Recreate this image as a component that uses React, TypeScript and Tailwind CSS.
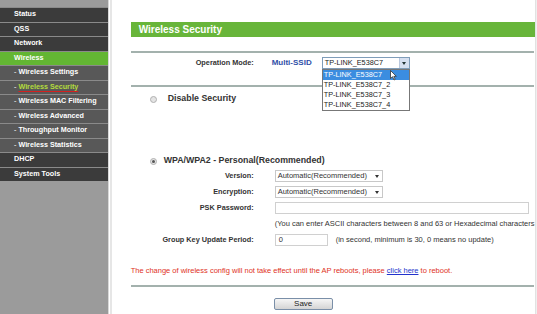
import React from "react";

const MENU: { label: string; sub?: boolean; active?: boolean; current?: boolean }[] = [
  { label: "Status" },
  { label: "QSS" },
  { label: "Network" },
  { label: "Wireless", active: true },
  { label: "Wireless Settings", sub: true },
  { label: "Wireless Security", sub: true, current: true },
  { label: "Wireless MAC Filtering", sub: true },
  { label: "Wireless Advanced", sub: true },
  { label: "Throughput Monitor", sub: true },
  { label: "Wireless Statistics", sub: true },
  { label: "DHCP" },
  { label: "System Tools" },
];

const SSIDS = ["TP-LINK_E538C7", "TP-LINK_E538C7_2", "TP-LINK_E538C7_3", "TP-LINK_E538C7_4"];

function Sidebar() {
  return (
    <aside className="w-[108px] shrink-0 bg-[#9b9b9b] pt-[7px]">
      {MENU.map((m) => {
        const bg = m.active ? "bg-[#63b633]" : m.sub ? "bg-[#585858]" : "bg-[#3b3b3b]";
        return (
          <div
            key={m.label}
            className={`h-[14.5px] border-t border-[#8a8a8a] flex items-center font-bold text-[7.2px] text-white pl-[14px] ${bg}`}
          >
            {m.sub && <span className="mr-[2px] text-[#cfcfcf]">-</span>}
            {m.current ? (
              <span className="text-[#b4dc3c] underline decoration-[#d42020] underline-offset-[2px]">{m.label}</span>
            ) : (
              <span>{m.label}</span>
            )}
          </div>
        );
      })}
    </aside>
  );
}

function Radio({ checked }: { checked?: boolean }) {
  return (
    <span className="w-[7px] h-[7px] rounded-full border border-[#b0b0b0] bg-[#e4e4e4] flex items-center justify-center">
      {checked && <span className="w-[3px] h-[3px] rounded-full bg-[#555]" />}
    </span>
  );
}

function Caret() {
  return <span className="ml-auto mr-[3px] w-0 h-0 border-l-[2.5px] border-r-[2.5px] border-t-[3px] border-l-transparent border-r-transparent border-t-[#333]" />;
}

function Row({ label, children }: { label: string; children: React.ReactNode }) {
  return (
    <div className="mt-[4px] h-[12px] flex items-center">
      <div className="w-[123px] text-right font-bold text-[7.3px] text-[#333]">{label}</div>
      <div className="pl-[21px] flex items-center h-full">{children}</div>
    </div>
  );
}

function Line() {
  return <div className="h-[2px] bg-[#a3b1ad] mr-[1px]" />;
}

export default function App() {
  return (
    <div className="flex w-[537px] h-[314px] overflow-hidden bg-white font-['Liberation_Sans',Arial,sans-serif]">
      <Sidebar />
      <div className="w-[1px] bg-[#d8d8d8]" />
      <div className="w-[1px] bg-[#6a6a6a]" />
      <div className="w-[1px] bg-white" />
      <div className="w-[2px] bg-[#e6e6e6]" />
      <main className="flex-1 pl-[19px] pt-[22px]">
        <div className="h-[15px] bg-[#68b53a] text-white font-bold text-[10px] pl-[8px] flex items-center">
          Wireless Security
        </div>

        <div className="mt-[14px]">
          <Line />
        </div>

        <div className="mt-[4px] h-[12px] flex items-center">
          <div className="w-[123px] text-right font-bold text-[7.3px] text-[#333]">Operation Mode:</div>
          <div className="ml-[18px] w-[50px] font-bold text-[8px] text-[#2f4fa8]">Multi-SSID</div>
          <div className="relative">
            <div className="w-[88px] h-[12px] border border-[#7f9db9] bg-white flex items-center text-[7.3px] text-[#222] pl-[2px]">
              TP-LINK_E538C7
              <span className="ml-auto w-[10px] h-full bg-[#d6e0f0] border-l border-[#b9c8de] flex items-center justify-center">
                <span className="w-0 h-0 border-l-[2px] border-r-[2px] border-t-[3px] border-l-transparent border-r-transparent border-t-[#233]" />
              </span>
            </div>
            <div className="absolute left-0 top-[12px] w-[88px] border border-[#777] bg-white z-10">
              {SSIDS.map((s, i) => (
                <div
                  key={s}
                  className={`h-[10px] flex items-center pl-[1px] text-[7.3px] ${i === 0 ? "bg-[#3b8de0] text-white" : "text-[#222]"}`}
                >
                  {s}
                </div>
              ))}
              <svg className="absolute left-[67px] top-[0px]" width="7" height="11" viewBox="0 0 7 11">
                <path d="M0.5 0.5 L0.5 8.5 L2.5 6.7 L4 10 L5.2 9.4 L3.8 6.3 L6.3 6.3 Z" fill="white" stroke="#333" strokeWidth="0.8" />
              </svg>
            </div>
          </div>
        </div>

        <div className="mt-[16px]">
          <Line />
        </div>

        <div className="mt-[7px] h-[10px] flex items-center">
          <span className="ml-[19px]"><Radio /></span>
          <span className="ml-[11px] font-bold text-[8.8px] text-[#333]">Disable Security</span>
        </div>

        <div className="mt-[52px] h-[10px] flex items-center">
          <span className="ml-[19px]"><Radio checked /></span>
          <span className="ml-[7px] font-bold text-[8.8px] text-[#333]">WPA/WPA2 - Personal(Recommended)</span>
        </div>

        <Row label="Version:">
          <div className="w-[108px] h-[12px] border border-[#c8c8c8] flex items-center pl-[2px] text-[7.5px] text-[#333]">
            Automatic(Recommended)
            <Caret />
          </div>
        </Row>
        <Row label="Encryption:">
          <div className="w-[108px] h-[12px] border border-[#c8c8c8] flex items-center pl-[2px] text-[7.5px] text-[#333]">
            Automatic(Recommended)
            <Caret />
          </div>
        </Row>
        <Row label="PSK Password:">
          <div className="w-[254px] h-[12px] border border-[#d0d0d0] bg-white" />
        </Row>
        <div className="mt-[4px] h-[12px] flex items-center pl-[144px] text-[7.5px] text-[#333] whitespace-nowrap">
          (You can enter ASCII characters between 8 and 63 or Hexadecimal characters
        </div>
        <Row label="Group Key Update Period:">
          <div className="w-[53px] h-[12px] border border-[#d0d0d0] flex items-center pl-[3px] text-[7.5px] text-[#333]">0</div>
          <span className="ml-[8px] text-[7.5px] text-[#333] whitespace-nowrap">(in second, minimum is 30, 0 means no update)</span>
        </Row>

        <div className="mt-[19px] h-[12px] flex items-center text-[7.5px] text-[#e0321e] whitespace-nowrap">
          The change of wireless config will not take effect until the AP reboots, please&nbsp;
          <a className="text-[#2233cc] underline">click here</a>&nbsp;to reboot.
        </div>

        <div className="mt-[8px]">
          <Line />
        </div>

        <div className="mt-[11px] pl-[143px] flex">
          <button className="w-[59px] h-[12px] border border-[#7a8fa8] rounded-[2px] bg-gradient-to-b from-[#f6f6f6] to-[#d4d4d4] text-[8px] text-[#222] leading-none flex items-center justify-center">
            Save
          </button>
        </div>
      </main>
      <div className="w-[3px] bg-[#efefef] border-l border-[#e2e2e2]" />
    </div>
  );
}
